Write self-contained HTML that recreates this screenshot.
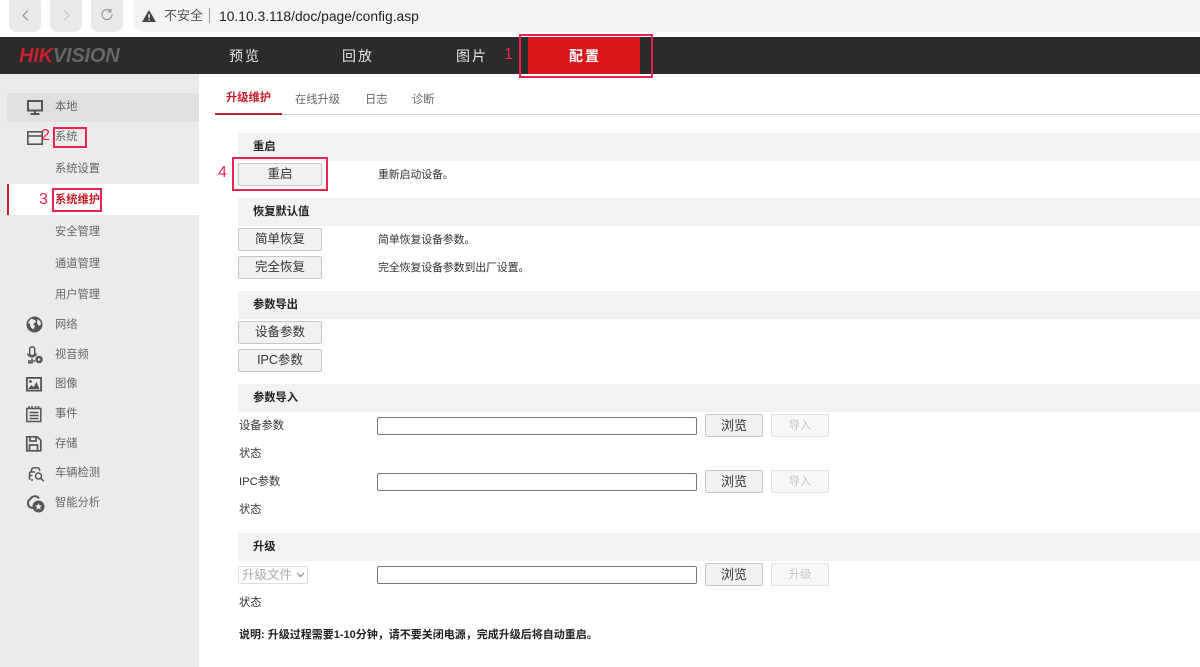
<!DOCTYPE html>
<html lang="zh-CN">
<head>
<meta charset="utf-8">
<title>config</title>
<style>
html,body{margin:0;padding:0;width:1200px;height:667px;overflow:hidden;background:#fff;font-family:"Liberation Sans","Noto Sans CJK SC",sans-serif;color:#333}
.a{position:absolute;white-space:nowrap}
.t{position:absolute;white-space:nowrap;font-size:11.25px;line-height:16px}
.d{font-size:11px;letter-spacing:-.2px}
.nav{position:absolute;white-space:nowrap;font-size:14px;line-height:20px;top:46px;color:#e6e6e6;letter-spacing:2px}
.side{position:absolute;left:55px;white-space:nowrap;font-size:11.25px;line-height:16px;color:#666}
.sec{position:absolute;left:238px;right:0;background:#f2f2f2;height:28px}
.sec b{position:absolute;left:15px;top:6px;font-size:11.25px;line-height:16px;color:#222}
.btn{position:absolute;box-sizing:border-box;width:84px;height:23px;border:1px solid #c6c6c6;border-radius:2px;background:#f1f1f1;font-size:12.5px;line-height:21px;text-align:center;color:#333;white-space:nowrap}
.sm{width:58px;font-size:13px}
.dis{color:#c4c4c4;background:#f8f8f8;border-color:#e2e2e2;font-size:11.25px;line-height:22px}
.inp{position:absolute;box-sizing:border-box;left:377px;width:320px;height:18px;background:#fff;border:1px solid #767676;border-radius:2px}
.red{position:absolute;box-sizing:border-box;border:2px solid #e8234f}
.num{position:absolute;color:#e8234f;font-size:16px;line-height:18px}
svg{position:absolute;overflow:visible}
</style>
</head>
<body>
<!-- browser bar -->
<div class="a" style="left:0;top:0;width:1200px;height:37px;background:#fff"></div>
<div class="a" style="left:9px;top:-6px;width:32px;height:38px;background:#e9e9e9;border-radius:8px"></div>
<div class="a" style="left:50px;top:-6px;width:32px;height:38px;background:#e9e9e9;border-radius:8px"></div>
<div class="a" style="left:91px;top:-6px;width:32px;height:38px;background:#e9e9e9;border-radius:8px"></div>
<svg style="left:0;top:0" width="130" height="32" fill="none">
<path d="M28 10.500l-5 5 5 5" stroke="#888" stroke-width="1"/>
<path d="M64 10.500l5 5-5 5" stroke="#bdbdbd" stroke-width="1"/>
<path d="M110.500 11a5 5 0 1 0 1.500 3.500M110.800 9v3h-3" stroke="#888" stroke-width="1"/>
</svg>
<div class="a" style="left:133px;top:-6px;width:1067px;height:38px;background:#f1f3f4;border-radius:12px 0 0 12px"></div>
<svg style="left:142px;top:10px" width="14" height="12"><path d="M7 0L14 12H0Z" fill="#444"/><rect x="6.300" y="4" width="1.400" height="4" fill="#f1f3f4"/><rect x="6.300" y="9" width="1.400" height="1.400" fill="#f1f3f4"/></svg>
<div class="a" style="left:164px;top:7px;font-size:13px;line-height:18px;color:#555">不安全</div>
<div class="a" style="left:209px;top:8px;width:1px;height:15px;background:#999"></div>
<div class="a" style="left:219px;top:7px;font-size:13.850px;line-height:19px;color:#222">10.10.3.118/doc/page/config.asp</div>

<!-- header -->
<div class="a" style="left:0;top:37px;width:1200px;height:37px;background:#2b2b2b"></div>
<div class="a" style="left:19px;top:46px;font-size:20px;line-height:21px;font-weight:bold;font-style:italic;letter-spacing:-.2px;color:#666"><span style="color:#c8202c">HIK</span>VISION</div>
<div class="nav" style="left:229px">预览</div>
<div class="nav" style="left:342px">回放</div>
<div class="nav" style="left:456px">图片</div>
<div class="a" style="left:528px;top:37px;width:112px;height:37px;background:#d9161c"></div>
<div class="nav" style="left:569px;color:#fff;font-weight:bold">配置</div>
<div class="red" style="left:519px;top:34px;width:134px;height:44px"></div>
<div class="num" style="left:504px;top:46px">1</div>

<!-- sidebar -->
<div class="a" style="left:0;top:74px;width:199px;height:593px;background:#ebebeb"></div>
<div class="a" style="left:7px;top:93px;width:192px;height:29px;background:#e0e0e0"></div>
<div class="a" style="left:7px;top:184px;width:192px;height:31px;background:#fff"></div>
<div class="a" style="left:7px;top:184px;width:2px;height:31px;background:#c8202c"></div>

<svg style="left:27px;top:100px" width="16" height="15" fill="none" stroke="#555" stroke-width="2"><rect x="1" y="1" width="14" height="9.500"/><path d="M8 11v2M3.500 14h9"/></svg>
<div class="side" style="top:99px">本地</div>
<svg style="left:27px;top:131px" width="16" height="14" fill="none" stroke="#555" stroke-width="1.600"><rect x=".8" y=".8" width="14.400" height="12.400"/><path d="M1 5h14"/></svg>
<div class="num" style="left:41px;top:127px">2</div>
<div class="side" style="top:129px">系统</div>
<div class="red" style="left:53px;top:127px;width:34px;height:21px"></div>
<div class="side" style="top:161px">系统设置</div>
<div class="num" style="left:39px;top:191px">3</div>
<div class="side" style="top:192px;color:#c8202c;font-weight:bold">系统维护</div>
<div class="red" style="left:52px;top:188px;width:50px;height:24px"></div>
<div class="side" style="top:224px">安全管理</div>
<div class="side" style="top:256px">通道管理</div>
<div class="side" style="top:287px">用户管理</div>

<svg style="left:26px;top:316px" width="18" height="18"><circle cx="8.500" cy="8.500" r="8" fill="#555"/><path d="M5 2.500l4 1.500 1 2-3 2 2 2-1.500 3.500-3-2.500-.5-3-2-1z M11.500 3l3 2.500.5 3-2 1.500-2-3z" fill="#ebebeb"/></svg>
<div class="side" style="top:317px">网络</div>
<svg style="left:26px;top:346px" width="18" height="18" fill="none" stroke="#555" stroke-width="1.500"><rect x="3.700" y=".7" width="5" height="9" rx="2.500"/><path d="M1.500 7.500a4.700 4.700 0 0 0 9 0M6 12.500v2M2 15h7M2 16.800h5"/><circle cx="13" cy="13.500" r="3.800" fill="#555" stroke="none"/><circle cx="13" cy="13.500" r="1.300" fill="#ebebeb" stroke="none"/></svg>
<div class="side" style="top:347px">视音频</div>
<svg style="left:26px;top:377px" width="16" height="15"><rect x=".9" y=".9" width="14.200" height="12.700" fill="none" stroke="#555" stroke-width="1.800"/><circle cx="4.500" cy="4.500" r="1.400" fill="#555"/><path d="M2 12l3.500-4 2 2 3-5 3 7z" fill="#555"/></svg>
<div class="side" style="top:376px">图像</div>
<svg style="left:26px;top:406px" width="16" height="16" fill="none" stroke="#555" stroke-width="1.500"><rect x=".8" y="2.500" width="14" height="13"/><path d="M3 0v2.500M6 0v2.500M9.500 0v2.500M12.500 0v2.500M3.500 6.500h9M3.500 9.500h9M3.500 12.500h9"/></svg>
<div class="side" style="top:406px">事件</div>
<svg style="left:26px;top:436px" width="16" height="16" fill="none" stroke="#555" stroke-width="1.700"><path d="M.8.800h10.500l3.500 3.500v10.500H.8z"/><path d="M4 1v4h6V1M3.500 14.500V9h8v5.500"/></svg>
<div class="side" style="top:436px">存储</div>
<svg style="left:28px;top:466px" width="17" height="17" fill="none" stroke="#555" stroke-width="1.500"><path d="M3 6l1-3.500C4.500 1.500 10 1.500 11 2.500l1 2.500M2.500 13h-1V7.500C1.500 6.500 2 6 3 6h4M4 13v2M1.500 9.500h3"/><circle cx="10.500" cy="10" r="3"/><path d="M12.700 12.200l3 3"/></svg>
<div class="side" style="top:465px">车辆检测</div>
<svg style="left:27px;top:495px" width="18" height="18"><path d="M12 3.500C10 .5 5 .5 3.500 4 .5 5 .2 10 2.800 12c1 .8 2 .9 3.200.7" fill="none" stroke="#555" stroke-width="2"/><circle cx="11.500" cy="11.500" r="6" fill="#555"/><path d="M11.500 8l1 2.400 2.500.2-1.900 1.600.6 2.500-2.200-1.300-2.200 1.300.6-2.500L8 10.600l2.500-.2z" fill="#ebebeb"/></svg>
<div class="side" style="top:495px">智能分析</div>

<!-- tabs -->
<div class="a" style="left:215px;top:114px;width:985px;height:1px;background:#d0d0d0"></div>
<div class="a" style="left:215px;top:113px;width:67px;height:2px;background:#c8202c"></div>
<div class="t" style="left:226px;top:90px;color:#c8202c;font-weight:bold">升级维护</div>
<div class="t" style="left:295px;top:92px;color:#666">在线升级</div>
<div class="t" style="left:365px;top:92px;color:#666">日志</div>
<div class="t" style="left:412px;top:92px;color:#666">诊断</div>

<!-- restart -->
<div class="sec" style="top:133px"><b>重启</b></div>
<div class="btn" style="left:238px;top:163px">重启</div>
<div class="red" style="left:232px;top:157px;width:96px;height:34px"></div>
<div class="num" style="left:218px;top:164px">4</div>
<div class="t d" style="left:378px;top:167px">重新启动设备。</div>

<!-- defaults -->
<div class="sec" style="top:198px"><b>恢复默认值</b></div>
<div class="btn" style="left:238px;top:228px">简单恢复</div>
<div class="t d" style="left:378px;top:232px">简单恢复设备参数。</div>
<div class="btn" style="left:238px;top:256px">完全恢复</div>
<div class="t d" style="left:378px;top:260px">完全恢复设备参数到出厂设置。</div>

<!-- export -->
<div class="sec" style="top:291px"><b>参数导出</b></div>
<div class="btn" style="left:238px;top:321px">设备参数</div>
<div class="btn" style="left:238px;top:349px">IPC参数</div>

<!-- import -->
<div class="sec" style="top:384px"><b>参数导入</b></div>
<div class="t" style="left:239px;top:418px">设备参数</div>
<div class="inp" style="top:417px"></div>
<div class="btn sm" style="left:705px;top:414px">浏览</div>
<div class="btn sm dis" style="left:771px;top:414px">导入</div>
<div class="t" style="left:239px;top:446px">状态</div>
<div class="t" style="left:239px;top:474px">IPC参数</div>
<div class="inp" style="top:473px"></div>
<div class="btn sm" style="left:705px;top:470px">浏览</div>
<div class="btn sm dis" style="left:771px;top:470px">导入</div>
<div class="t" style="left:239px;top:502px">状态</div>

<!-- upgrade -->
<div class="sec" style="top:533px"><b>升级</b></div>
<div class="a" style="left:238px;top:566px;box-sizing:border-box;width:70px;height:18px;border:1px solid #ddd;border-radius:2px;font-size:12.500px;line-height:16px;color:#aaa;padding-left:3px">升级文件</div>
<svg style="left:296px;top:572px" width="9" height="6" fill="none"><path d="M1 1l3.500 3.500L8 1" stroke="#999" stroke-width="1.400"/></svg>
<div class="inp" style="top:566px"></div>
<div class="btn sm" style="left:705px;top:563px">浏览</div>
<div class="btn sm dis" style="left:771px;top:563px">升级</div>
<div class="t" style="left:239px;top:595px">状态</div>
<div class="t" style="left:239px;top:627px;font-weight:bold;font-size:11px;color:#222">说明: 升级过程需要1-10分钟，请不要关闭电源，完成升级后将自动重启。</div>
</body>
</html>
